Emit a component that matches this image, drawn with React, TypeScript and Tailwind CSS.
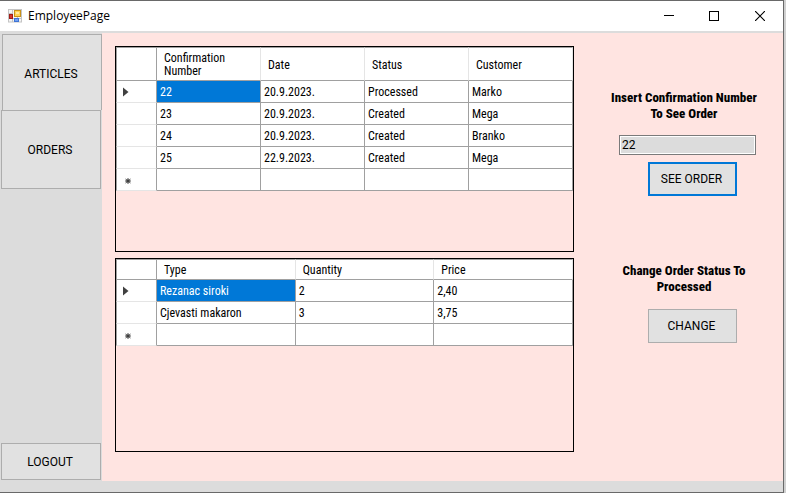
import React from "react";

type GridProps = {
  label: string;
  columns: string[];
  rows: string[][];
  widths: string[];
  headHeight: string;
};

function RowMarker({ kind }: { kind: "current" | "new" | "none" }) {
  if (kind === "current") {
    return (
      <svg width="6" height="10" viewBox="0 0 6 10" className="block" aria-hidden="true">
        <path d="M0 0.5 L5.5 5 L0 9.5 Z" fill="#404040" />
      </svg>
    );
  }
  if (kind === "new") {
    return (
      <svg width="9" height="8" viewBox="0 0 9 8" className="block" aria-hidden="true">
        <path d="M5 1v6M2.5 2l5 4M7.5 2l-5 4M2 4h6" stroke="#555" strokeWidth="1" fill="none" />
        <rect x="3.5" y="2.5" width="3" height="3" fill="#404040" />
      </svg>
    );
  }
  return null;
}

function DataGrid({ label, columns, rows, widths, headHeight }: GridProps) {
  const allRows = [...rows, columns.map(() => "")];
  return (
    <table
      aria-label={label}
      className="w-full table-fixed border-separate border-spacing-0 bg-white text-left font-['Roboto_Condensed','Roboto',sans-serif]"
    >
      <colgroup>
        <col className="w-[41px]" />
        {widths.map((w, i) => (
          <col key={i} className={w} />
        ))}
      </colgroup>
      <thead>
        <tr className={headHeight}>
          <td className="border border-[#a0a0a0] p-0" />
          {columns.map((c) => (
            <th
              key={c}
              scope="col"
              className="border-y border-r border-y-[#a0a0a0] border-r-[#e5e5e5] pt-[2px] pr-6 pb-0 pl-[7px] align-middle leading-[13px] font-normal"
            >
              {c}
            </th>
          ))}
        </tr>
      </thead>
      <tbody>
        {allRows.map((row, r) => (
          <tr key={r} className="h-[22px]">
            <td className="border-x border-b border-x-[#a0a0a0] border-b-[#e5e5e5] py-0 pr-0 pl-[6px] align-middle">
              <div className={r === allRows.length - 1 ? "pt-[3px]" : "pt-px"}>
                <RowMarker kind={r === 0 ? "current" : r === allRows.length - 1 ? "new" : "none"} />
              </div>
            </td>
            {row.map((cell, c) => (
              <td
                key={c}
                className={
                  r === 0 && c === 0
                    ? "border-r border-b border-[#a0a0a0] bg-[#0078d7] px-[3px] py-0 align-middle leading-4 text-white"
                    : "border-r border-b border-[#a0a0a0] px-[3px] py-0 align-middle leading-4"
                }
              >
                {cell}
              </td>
            ))}
          </tr>
        ))}
      </tbody>
    </table>
  );
}

function TitleBar() {
  return (
    <header className="flex h-[30px] items-center bg-white pl-2">
      <svg width="14" height="14" viewBox="0 0 14 14" aria-hidden="true">
        <rect x="0.5" y="0.5" width="13" height="12.5" fill="#f4f4f4" stroke="#c4c4c4" />
        <path d="M4.5 0v13M9.5 8v5M0 4.5h5M0 9.5h14" stroke="#c4c4c4" />
        <rect x="6.5" y="1.5" width="6" height="6" fill="#ffd452" stroke="#c8921a" />
        <rect x="8" y="3" width="3" height="2" fill="#ffe9a0" />
        <rect x="1.5" y="5.5" width="3" height="4" fill="#d8382e" stroke="#a01c16" />
        <rect x="6.5" y="9.5" width="4" height="3" fill="#6fa0f4" stroke="#3f74d4" />
      </svg>
      <h1 className="ml-[6px] flex-1 font-['Open_Sans','Noto_Sans',sans-serif]">EmployeePage</h1>
      <div className="flex h-full">
        <button type="button" aria-label="Minimize" className="flex w-11 items-center justify-center">
          <svg width="10" height="10" viewBox="0 0 10 10" shapeRendering="crispEdges">
            <path d="M0 4.5h10" stroke="#000" />
          </svg>
        </button>
        <button type="button" aria-label="Maximize" className="flex w-[46px] items-center justify-center">
          <svg width="10" height="10" viewBox="0 0 10 10" shapeRendering="crispEdges">
            <rect x="0.5" y="0.5" width="9" height="9" fill="none" stroke="#000" />
          </svg>
        </button>
        <button type="button" aria-label="Close" className="flex w-[46px] items-center justify-center">
          <svg width="10" height="10" viewBox="0 0 10 10">
            <path d="M0 0L10 10M10 0L0 10" stroke="#000" strokeWidth="1.2" />
          </svg>
        </button>
      </div>
    </header>
  );
}

export default function App() {
  return (
    <div className="flex min-h-screen bg-[#dcdcdc] font-['Roboto',sans-serif] text-xs text-black">
      <div className="flex flex-1 flex-col border-t border-r border-b border-[#696969]">
        <TitleBar />
        <div className="flex flex-1 pt-[2px] pb-[11px]">
          <nav className="flex w-[102px] shrink-0 flex-col pt-px pl-px">
            <button
              type="button"
              className="ml-px h-[76px] border border-b-0 border-[#adadad] bg-[#e1e1e1] pt-[3px] pr-[2px]"
            >
              ARTICLES
            </button>
            <button type="button" className="mr-px h-[79px] border border-[#adadad] bg-[#e1e1e1] pr-[2px]">
              ORDERS
            </button>
            <button
              type="button"
              className="mt-auto mr-px mb-px h-[37px] border border-[#adadad] bg-[#e1e1e1] pr-[2px]"
            >
              LOGOUT
            </button>
          </nav>
          <main className="flex flex-1 bg-[#ffe4e1]">
            <div className="flex flex-1 flex-col gap-[6px] pt-[13px] pb-[29px] pl-[13px]">
              <section className="h-[206px] border border-black">
                <DataGrid
                  label="Orders"
                  headHeight="h-[34px]"
                  widths={["", "", "", ""]}
                  columns={["Confirmation Number", "Date", "Status", "Customer"]}
                  rows={[
                    ["22", "20.9.2023.", "Processed", "Marko"],
                    ["23", "20.9.2023.", "Created", "Mega"],
                    ["24", "20.9.2023.", "Created", "Branko"],
                    ["25", "22.9.2023.", "Created", "Mega"],
                  ]}
                />
              </section>
              <section className="min-h-[194px] flex-1 border border-black">
                <DataGrid
                  label="Order items"
                  headHeight="h-[21px]"
                  widths={["", "", ""]}
                  columns={["Type", "Quantity", "Price"]}
                  rows={[
                    ["Rezanac siroki", "2", "2,40"],
                    ["Cjevasti makaron", "3", "3,75"],
                  ]}
                />
              </section>
            </div>
            <aside className="flex w-[209px] shrink-0 flex-col pt-[57px]">
              <form className="flex flex-col" onSubmit={(e) => e.preventDefault()}>
                <label
                  htmlFor="confirmation"
                  className="pl-[11px] text-center font-['Roboto_Condensed','Roboto',sans-serif] text-[13px] leading-4 font-extrabold"
                >
                  Insert Confirmation Number
                  <br />
                  To See Order
                </label>
                <input
                  id="confirmation"
                  type="text"
                  defaultValue="22"
                  className="mt-[13px] mr-[27px] ml-[45px] h-5 rounded-none border border-[#7a7a7a] bg-[#dcdcdc] px-[2px] leading-4 shadow-[inset_0_0_0_1px_#fff] outline-none"
                />
                <button
                  type="submit"
                  className="mt-[7px] ml-[74px] h-[34px] w-[89px] border-2 border-[#0078d7] bg-[#e1e1e1] pr-[2px]"
                >
                  SEE ORDER
                </button>
              </form>
              <h2 className="mt-[67px] pl-[11px] text-center font-['Roboto_Condensed','Roboto',sans-serif] text-[13px] leading-4 font-extrabold">
                Change Order Status To
                <br />
                Processed
              </h2>
              <button
                type="button"
                className="mt-[14px] ml-[74px] h-[34px] w-[89px] border border-[#adadad] bg-[#e1e1e1] pr-[2px]"
              >
                CHANGE
              </button>
            </aside>
          </main>
        </div>
      </div>
      <div className="w-[2px] shrink-0 bg-[#d0d0d0]" />
    </div>
  );
}
